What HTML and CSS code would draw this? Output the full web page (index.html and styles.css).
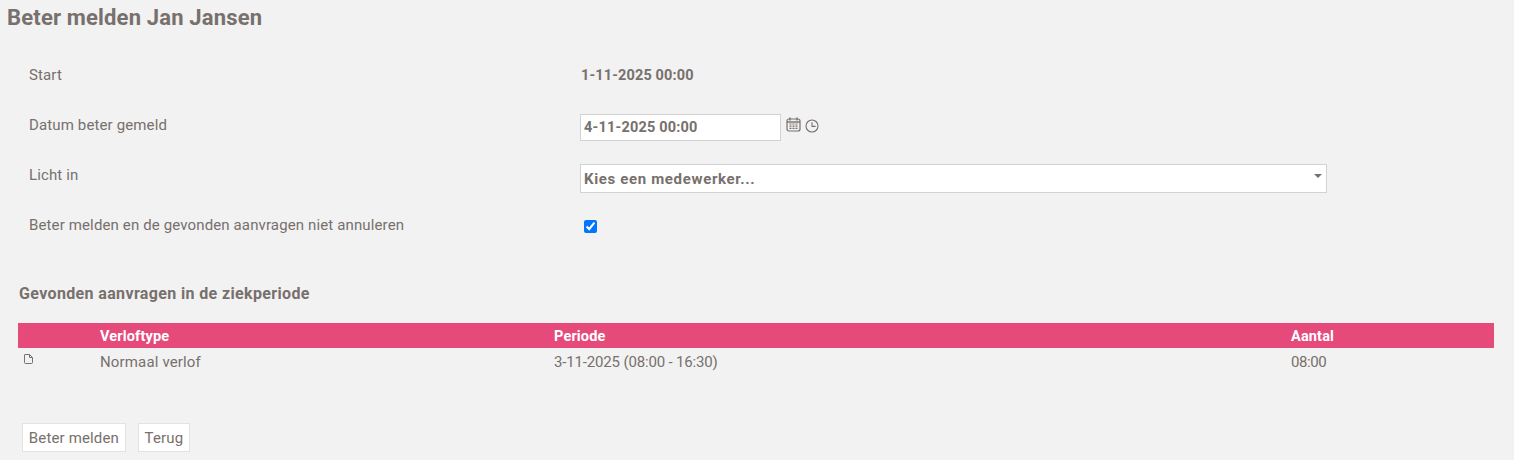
FILE: index.html
```html
<!DOCTYPE html>
<html lang="nl">
<head>
    <meta charset="UTF-8">
    <title>Beter melden</title>
    <link rel="stylesheet" href="styles.css">
</head>
<body>
    <h1 class="page-title">Beter melden Jan Jansen</h1>
    <div class="form">
        <div class="row">
            <div class="label">Start</div>
            <div class="value"><b class="start">1-11-2025 00:00</b></div>
        </div>
        <div class="row">
            <div class="label">Datum beter gemeld</div>
            <div class="value">
                <input class="date" type="text" value="4-11-2025 00:00">
                <svg class="icon-cal" width="15" height="15" viewBox="0 0 15 15">
                    <rect x="1" y="2" width="13" height="12" rx="2" fill="none" stroke="#77706c" stroke-width="1.2"/>
                    <path d="M1 5h13" stroke="#77706c" stroke-width="1.4"/>
                    <path d="M4 0.5v3M11 0.5v3" stroke="#77706c" stroke-width="1.4"/>
                    <path d="M3.5 7h2M6.5 7h2M9.5 7h2M3.5 9.2h2M6.5 9.2h2M9.5 9.2h2M3.5 11.4h2M6.5 11.4h2M9.5 11.4h2" stroke="#77706c" stroke-width="1.2"/>
                </svg>
                <svg class="icon-clock" width="14" height="14" viewBox="0 0 14 14">
                    <circle cx="7" cy="7" r="6" fill="none" stroke="#77706c" stroke-width="1.1"/>
                    <path d="M7 3.2V7.4H10.6" fill="none" stroke="#77706c" stroke-width="1.1"/>
                </svg>
            </div>
        </div>
        <div class="row">
            <div class="label">Licht in</div>
            <div class="value">
                <div class="select">
                    <span>Kies een medewerker...</span>
                    <i class="arrow"></i>
                </div>
            </div>
        </div>
        <div class="row">
            <div class="label">Beter melden en de gevonden aanvragen niet annuleren</div>
            <div class="value"><input class="check" type="checkbox" checked></div>
        </div>
    </div>

    <h2 class="sub-title">Gevonden aanvragen in de ziekperiode</h2>

    <table class="list">
        <thead>
            <tr>
                <th class="col-icon"></th>
                <th class="col-type">Verloftype</th>
                <th class="col-period">Periode</th>
                <th>Aantal</th>
            </tr>
        </thead>
        <tbody>
            <tr>
                <td class="file">
                    <svg width="9" height="10" viewBox="0 0 9 10">
                        <path d="M1 .5H5.500L8.500 3.500V8.500A1 1 0 0 1 7.500 9.500H1.500A1 1 0 0 1 .5 8.500V1A.5 .5 0 0 1 1 .5ZM5.500 .5V3.500H8.500" fill="none" stroke="#77706c" stroke-width="1"/>
                    </svg>
                </td>
                <td class="type">Normaal verlof</td>
                <td class="period">3-11-2025 (08:00 - 16:30)</td>
                <td class="amount">08:00</td>
            </tr>
        </tbody>
    </table>

    <div class="buttons">
        <button>Beter melden</button>
        <button>Terug</button>
    </div>
</body>
</html>
```

FILE: styles.css
```css
* {
    box-sizing: border-box;
}
body {
    margin: 0;
    background: #f2f2f2;
    color: #77706c;
    font-family: "Roboto", "Liberation Sans", sans-serif;
    font-size: 15px;
}
.page-title {
    margin: 0;
    padding: 6px 0 0 7px;
    height: 50px;
    font-size: 22px;
    line-height: 24px;
    font-weight: 700;
    letter-spacing: 0.17px;
}
.row {
    display: flex;
    align-items: center;
    height: 50px;
    padding-left: 29px;
}
.label {
    width: 551px;
    letter-spacing: 0.13px;
}
.value {
    display: flex;
    align-items: flex-start;
    flex: 1;
}
.start {
    padding-left: 1px;
    font-size: 14.5px;
    letter-spacing: 0.13px;
}
input.date {
    width: 201px;
    height: 27px;
    padding: 0 3px;
    margin-top: 5px;
    border: 1px solid #d2d2d2;
    background: #fff;
    color: #77706c;
    font: 700 14.5px "Roboto", "Liberation Sans", sans-serif;
    letter-spacing: 0.2px;
}
.icon-cal {
    margin: 8px 0 0 5px;
}
.icon-clock {
    margin: 10px 0 0 4px;
}
.select {
    display: flex;
    align-items: center;
    justify-content: space-between;
    width: 747px;
    height: 29px;
    padding: 1px 4px 0 3px;
    margin-top: 7px;
    border: 1px solid #d2d2d2;
    background: #fff;
    font-size: 15px;
    font-weight: 700;
    letter-spacing: 0.65px;
}
.arrow {
    margin-bottom: 6px;
    border-left: 4px solid transparent;
    border-right: 4px solid transparent;
    border-top: 4px solid #77706c;
}
.check {
    width: 13px;
    height: 13px;
    margin: 2px 0 0 4px;
    accent-color: #0075ff;
}
.sub-title {
    margin: 0;
    padding: 35px 0 0 19px;
    height: 73px;
    font-size: 16px;
    line-height: 18px;
    font-weight: 700;
    letter-spacing: 0.36px;
}
.list {
    width: 1476px;
    margin-left: 18px;
    border-collapse: collapse;
    table-layout: fixed;
}
.list th {
    height: 25px;
    padding: 1px 0 0;
    background: #e54a7b;
    color: #fff;
    font-size: 14.5px;
    letter-spacing: 0.15px;
    text-align: left;
}
.list td {
    height: 28px;
    padding: 0;
    vertical-align: middle;
}
.col-icon {
    width: 82px;
}
.col-type {
    width: 454px;
}
.col-period {
    width: 737px;
}
.list td.file {
    padding: 6px 0 0 6px;
    vertical-align: top;
}
.file svg {
    display: block;
}
.type {
    letter-spacing: 0.15px;
}
.period {
    letter-spacing: -0.16px;
}
.amount {
    letter-spacing: -0.4px;
}
.buttons {
    display: flex;
    gap: 12px;
    padding: 47px 0 0 22px;
}
button {
    height: 29px;
    padding: 0 5.8px;
    border: 1px solid #e2e2e2;
    background: #fff;
    color: #77706c;
    font: 15px "Roboto", "Liberation Sans", sans-serif;
    letter-spacing: 0.15px;
}
```
